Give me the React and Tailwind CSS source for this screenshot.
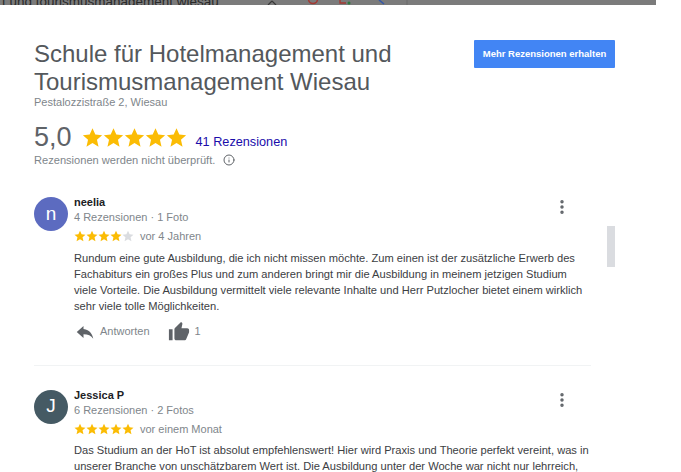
import { MoreVertical, Info } from "lucide-react";

const sans = "font-['Liberation_Sans',Arial,sans-serif]";

function Star({ on = true, size = 14 }) {
  return (
    <svg width={size} height={size} viewBox="0 0 24 24" className={on ? "fill-[#fbbc04]" : "fill-[#dadce0]"}>
      <path d="M12 1.5l3.2 7.2 7.8.8-5.9 5.2 1.8 7.8L12 18.4l-6.9 4.1 1.8-7.8L1 9.5l7.8-.8z" />
    </svg>
  );
}

function Review({ initial, color, name, meta, rating, time, children, footer }) {
  return (
    <div className="flex">
      <div className={`mt-[1px] flex h-[34px] w-[34px] shrink-0 items-center justify-center rounded-full text-[19px] text-white ${color}`}>
        {initial}
      </div>
      <div className="ml-[6px] w-[512px]">
        <div className="flex items-start justify-between">
          <div>
            <div className="text-[11px] font-bold leading-[13px] text-[#202124]">{name}</div>
            <div className="mt-[1px] text-[11px] leading-[15px] text-[#80868b]">{meta}</div>
          </div>
          <MoreVertical className="mt-[2px] mr-[15px] h-[18px] w-[18px] text-[#5f6368]" strokeWidth={2.6} />
        </div>
        <div className="mt-[3px] flex items-center">
          {[0, 1, 2, 3, 4].map((i) => (
            <Star key={i} on={i < rating} size={12} />
          ))}
          <span className="ml-[6px] text-[11px] text-[#80868b]">{time}</span>
        </div>
        <div className="mt-[5px] whitespace-nowrap text-[11.13px] leading-[16px] text-[#3c4043]">{children}</div>
        {footer}
      </div>
    </div>
  );
}

export default function App() {
  return (
    <div className={`relative h-[472px] w-[681px] overflow-hidden bg-white ${sans}`}>
      <div className="flex h-[5px] w-[656px] overflow-hidden bg-[#7b7b7b] pl-[2px]">
        <span className="block w-[263px] shrink-0 -translate-y-[6px] whitespace-nowrap text-[13.5px] leading-[15px] text-[#2a2a2a]">
          t und tourismusmanagement wiesau
        </span>
        {/* browser toolbar icons, only their lower edge shows */}
        <svg width="145" height="5" viewBox="0 0 145 5" fill="none" className="shrink-0">
          <path d="M3 5L7 1M11 5L7 1" stroke="#3a3a3a" strokeWidth="1.2" />
          <circle cx="48" cy="-1" r="4.500" stroke="#a33a33" strokeWidth="1.6" />
          <path d="M75 0v3h6" stroke="#a33a33" strokeWidth="1.4" />
          <circle cx="84" cy="3" r="1.500" fill="#2f7a3f" />
          <path d="M114 0l5 4" stroke="#3558a8" strokeWidth="1.6" />
          <path d="M142 0v5" stroke="#6a6a6a" />
        </svg>
      </div>

      <div className="pl-[34px] pr-[66px]">
        <div className="mt-[35px] flex items-start justify-between">
          <div>
            <h1 className="text-[24px] leading-[28px] text-[#54585c]">
              Schule für Hotelmanagement und
              <br />
              Tourismusmanagement Wiesau
            </h1>
            <div className="text-[11px] leading-[12px] text-[#80868b]">Pestalozzistraße 2, Wiesau</div>
          </div>
          <button className="h-[28px] w-[141px] rounded-[1px] bg-[#4285f4] text-center text-[9.5px] font-bold text-white">
            Mehr Rezensionen erhalten
          </button>
        </div>

        <div className="mt-[13px] flex items-center">
          <span className="text-[27px] leading-[32px] text-[#5f6368]">5,0</span>
          <div className="ml-[10px] flex">
            {[0, 1, 2, 3, 4].map((i) => (
              <Star key={i} size={21} />
            ))}
          </div>
          <span className="ml-[9px] mt-[12px] text-[12.7px] text-[#1a0dab]">41 Rezensionen</span>
        </div>
        <div className="flex items-center text-[11.1px] leading-[14px] text-[#80868b]">
          Rezensionen werden nicht überprüft.
          <Info className="ml-[8px] h-[12px] w-[12px] text-[#5f6368]" />
        </div>

        <div className="mt-[29px]">
          <Review
            initial="n"
            color="bg-[#5c6bc0]"
            name="neelia"
            meta="4 Rezensionen · 1 Foto"
            rating={4}
            time="vor 4 Jahren"
            footer={
              <div className="mt-[7px] flex items-center pl-[2px] text-[11px] text-[#80868b]">
                <svg width="18" height="18" viewBox="0 0 24 24" className="fill-[#5f6368]">
                  <path d="M10 9V4l-9 8 9 8v-5.100c6 0 10.200 1.900 13 6.100-1-6-4.500-12-13-13z" />
                </svg>
                <span className="ml-[6px]">Antworten</span>
                <svg width="22" height="22" viewBox="0 0 24 24" className="ml-[18px] fill-[#5f6368]">
                  <path d="M1 21h4V9H1v12zm22-11c0-1.100-.9-2-2-2h-6.300l1-4.600v-.3c0-.4-.2-.8-.4-1.100L14.200 1 7.600 7.600C7.200 8 7 8.500 7 9v10c0 1.100.9 2 2 2h9c.8 0 1.500-.5 1.800-1.200l3-7c.1-.2.2-.5.2-.7v-2z" />
                </svg>
                <span className="ml-[5px]">1</span>
              </div>
            }
          >
            Rundum eine gute Ausbildung, die ich nicht missen möchte. Zum einen ist der zusätzliche Erwerb des
            <br />
            Fachabiturs ein großes Plus und zum anderen bringt mir die Ausbildung in meinem jetzigen Studium
            <br />
            viele Vorteile. Die Ausbildung vermittelt viele relevante Inhalte und Herr Putzlocher bietet einem wirklich
            <br />
            sehr viele tolle Möglichkeiten.
          </Review>
        </div>

        <div className="mt-[22px] h-px w-[557px] bg-[#f1f3f4]" />

        <div className="mt-[23px]">
          <Review
            initial="J"
            color="bg-[#455a64]"
            name="Jessica P"
            meta="6 Rezensionen · 2 Fotos"
            rating={5}
            time="vor einem Monat"
          >
            Das Studium an der HoT ist absolut empfehlenswert! Hier wird Praxis und Theorie perfekt vereint, was in
            <br />
            unserer Branche von unschätzbarem Wert ist. Die Ausbildung unter der Woche war nicht nur lehrreich,
          </Review>
        </div>
      </div>

      {/* scrollbar thumb */}
      <div className="absolute left-[607px] top-[226px] h-[41px] w-[8px] bg-[#dadce0]" />
    </div>
  );
}
